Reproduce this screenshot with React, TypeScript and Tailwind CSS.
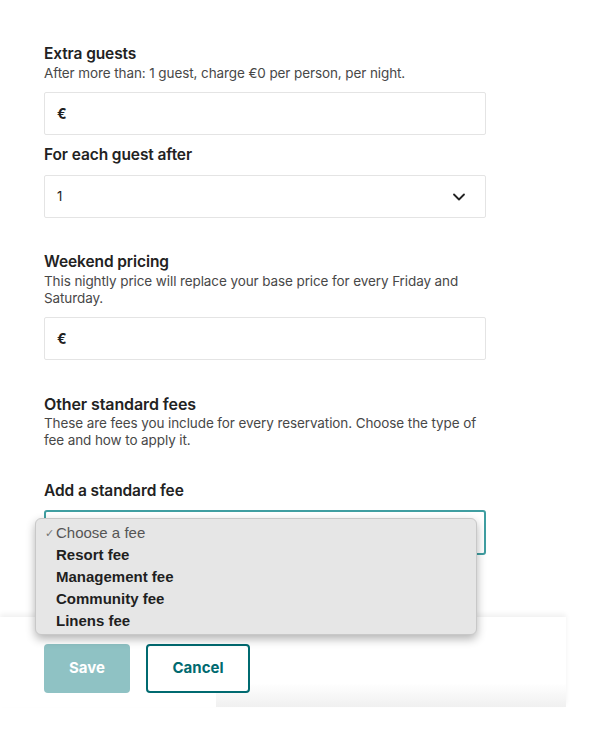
import { ChevronDown } from "lucide-react";

const fees = ["Resort fee", "Management fee", "Community fee", "Linens fee"];

function Heading({ children, big }: { children: React.ReactNode; big?: boolean }) {
  return (
    <h3
      className={`${big ? "text-[16px]" : "text-[15.5px]"} leading-5 font-semibold text-[#222222] tracking-[-0.1px]`}
    >
      {children}
    </h3>
  );
}

function Sub({ children }: { children: React.ReactNode }) {
  return (
    <p className="text-[13.5px] leading-[17px] text-[#484848] tracking-[-0.1px]">{children}</p>
  );
}

function EuroInput() {
  return (
    <div className="h-[43px] border border-[#e4e4e4] rounded-[2px] flex items-center px-[12px] text-[14px] font-bold text-[#222222]">
      €
    </div>
  );
}

export default function App() {
  return (
    <div
      className="w-[600px] h-[739px] bg-white overflow-hidden relative"
      style={{ fontFamily: "Inter, 'Noto Sans', sans-serif" }}
    >
      <div className="w-[486px] pl-[44px] pt-[44px]">
        {/* Extra guests */}
        <Heading>Extra guests</Heading>
        <div className="mt-[1px] mb-[10px]">
          <Sub>After more than: 1 guest, charge €0 per person, per night.</Sub>
        </div>
        <EuroInput />

        <div className="mt-[10px] mb-[10px]">
          <Heading>For each guest after</Heading>
        </div>
        <div className="h-[43px] border border-[#e4e4e4] rounded-[2px] flex items-center justify-between pl-[12px] pr-[16px] text-[13px] text-[#222222]">
          <span>1</span>
          <ChevronDown className="w-[20px] h-[20px] text-[#222222]" strokeWidth={2.2} />
        </div>

        {/* Weekend pricing */}
        <div className="mt-[34px]">
          <Heading>Weekend pricing</Heading>
        </div>
        <div className="mt-[1px] mb-[10px]">
          <Sub>
            This nightly price will replace your base price for every Friday and
            Saturday.
          </Sub>
        </div>
        <EuroInput />

        {/* Other standard fees */}
        <div className="mt-[34px]">
          <Heading big>Other standard fees</Heading>
        </div>
        <div className="mt-[1px]">
          <Sub>
            These are fees you include for every reservation. Choose the type of
            fee and how to apply it.
          </Sub>
        </div>

        <div className="mt-[32px] mb-[9px]">
          <Heading>Add a standard fee</Heading>
        </div>
        <div className="relative">
          <div className="h-[45px] border-2 border-[#3f9ea1] rounded-[3px]" />
          {/* native select menu */}
          <div
            className="absolute left-[-9px] top-[8px] w-[442px] h-[117px] bg-[#e6e6e6] rounded-[6px] border border-[#c8c8c8] shadow-[0_4px_10px_rgba(0,0,0,0.3)] z-20 pt-[3px] flex flex-col"
            style={{ fontFamily: "'Liberation Sans', Arial, sans-serif" }}
          >
            <div className="h-[22px] flex items-center text-[15px] text-[#555555]">
              <span className="w-[20px] text-right pr-[2px] text-[11px] text-[#777777]">✓</span>
              <span>Choose a fee</span>
            </div>
            {fees.map((f) => (
              <div key={f} className="h-[22px] flex items-center text-[15px] font-bold text-[#1f1f1f]">
                <span className="w-[20px]" />
                <span>{f}</span>
              </div>
            ))}
          </div>
        </div>
      </div>

      {/* footer bar */}
      <div className="mt-[62px] w-[566px] h-[90px] bg-white shadow-[0_-3px_5px_rgba(0,0,0,0.06)] relative flex items-start gap-[16px] pl-[44px] pt-[27px]">
        <div className="absolute left-[216px] right-0 bottom-0 h-[24px] bg-gradient-to-b from-white to-[#f0f0f0]" />
        <button className="relative w-[86px] h-[49px] rounded-[4px] bg-[#8fc2c4] text-white text-[15px] font-bold">
          Save
        </button>
        <button className="relative w-[104px] h-[49px] rounded-[4px] border-2 border-[#006a70] bg-white text-[#006a70] text-[15px] font-bold">
          Cancel
        </button>
      </div>
    </div>
  );
}
